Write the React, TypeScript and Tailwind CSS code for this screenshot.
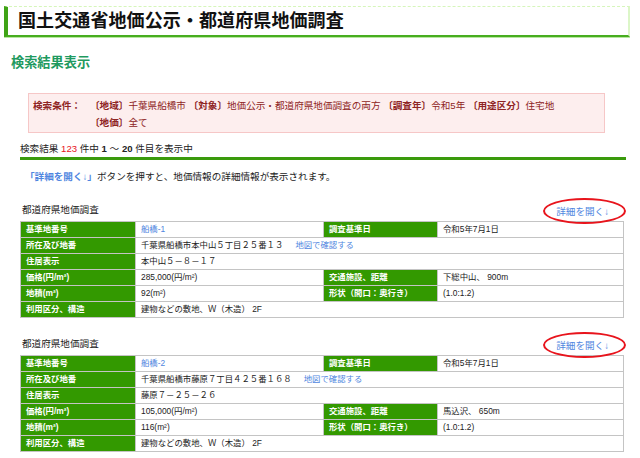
import React from 'react';

type Row =
  | { kind: 'pair'; l1: string; v1: React.ReactNode; l2: string; v2: React.ReactNode }
  | { kind: 'wide'; l1: string; v1: React.ReactNode };

interface Survey {
  no: string;
  date: string;
  address: string;
  residence: string;
  price: string;
  station: string;
  area: string;
  shape: string;
  use: string;
}

const surveys: Survey[] = [
  {
    no: '船橋-1',
    date: '令和5年7月1日',
    address: '千葉県船橋市本中山５丁目２５番１３',
    residence: '本中山５－８－１７',
    price: '285,000(円/m²)',
    station: '下総中山、 900m',
    area: '92(m²)',
    shape: '(1.0:1.2)',
    use: '建物などの敷地、Ｗ（木造） 2F',
  },
  {
    no: '船橋-2',
    date: '令和5年7月1日',
    address: '千葉県船橋市藤原７丁目４２５番１６８',
    residence: '藤原７－２５－２６',
    price: '105,000(円/m²)',
    station: '馬込沢、 650m',
    area: '116(m²)',
    shape: '(1.0:1.2)',
    use: '建物などの敷地、Ｗ（木造） 2F',
  },
];

const Label = ({ children }: { children: React.ReactNode }) => (
  <div className="bg-[#339900] text-white font-bold pl-[5px] flex items-center whitespace-nowrap">
    {children}
  </div>
);

const Value = ({ children, wide }: { children: React.ReactNode; wide?: boolean }) => (
  <div className={`bg-white text-[#222] pl-[5px] flex items-center whitespace-nowrap ${wide ? 'col-span-3' : ''}`}>
    {children}
  </div>
);

// 地価調査の1件分（見出し＋表）
function SurveyBlock({ s }: { s: Survey }) {
  const rows: Row[] = [
    { kind: 'pair', l1: '基準地番号', v1: <span className="text-[#4f86e0]">{s.no}</span>, l2: '調査基準日', v2: s.date },
    {
      kind: 'wide',
      l1: '所在及び地番',
      v1: (
        <>
          {s.address}
          <span className="ml-[12px] text-[#4f86e0]">地図で確認する</span>
        </>
      ),
    },
    { kind: 'wide', l1: '住居表示', v1: s.residence },
    { kind: 'pair', l1: '価格(円/m²)', v1: s.price, l2: '交通施設、距離', v2: s.station },
    { kind: 'pair', l1: '地積(m²)', v1: s.area, l2: '形状（間口：奥行き）', v2: s.shape },
    { kind: 'wide', l1: '利用区分、構造', v1: s.use },
  ];

  return (
    <div className="ml-[20px] w-[604px] mt-[19px]">
      <div className="flex justify-between h-[18px]">
        <div className="ml-[2px] text-[9.6px] leading-[14px] text-[#222]">都道府県地価調査</div>
        <div className="relative mr-[15px] mt-[2px] text-[9.6px] leading-[14px] text-[#4f86e0]">
          詳細を開く↓
          {/* 赤い丸囲み */}
          <span className="absolute left-[-13px] right-[-17px] top-[-7px] bottom-[-3px] rounded-[50%] border-[2.5px] border-[#e8141c] pointer-events-none" />
        </div>
      </div>
      <div className="grid grid-cols-[114px_187px_113px_185px] auto-rows-[15px] gap-px p-px bg-[#c4c4c4] text-[8.4px]">
        {rows.map((r, i) =>
          r.kind === 'pair' ? (
            <React.Fragment key={i}>
              <Label>{r.l1}</Label>
              <Value>{r.v1}</Value>
              <Label>{r.l2}</Label>
              <Value>{r.v2}</Value>
            </React.Fragment>
          ) : (
            <React.Fragment key={i}>
              <Label>{r.l1}</Label>
              <Value wide>{r.v1}</Value>
            </React.Fragment>
          )
        )}
      </div>
    </div>
  );
}

export default function App() {
  return (
    <div
      className="w-[640px] h-[458px] overflow-hidden bg-white flex flex-col"
      style={{ fontFamily: '"Liberation Sans", "Noto Sans CJK JP", sans-serif' }}
    >
      {/* タイトル */}
      <div className="mt-[6px] ml-[4px] w-[626px] h-[31px] border-solid [border-top-style:dashed] border-l-4 border-l-[#3fa316] border-t border-t-[#d6f6bb] border-r-2 border-r-[#dcf6c8] border-b-2 border-b-[#47ad1f] flex items-center shadow-[0_1px_0_#b8e6a0]">
        <h1 className="pl-[10px] text-[18px] font-bold text-[#111] tracking-[0.1px]">国土交通省地価公示・都道府県地価調査</h1>
      </div>

      <h2 className="mt-[18px] ml-[11px] text-[13.2px] leading-[16px] font-bold text-[#1f9a5f]">検索結果表示</h2>

      {/* 検索条件 */}
      <div className="mt-[22px] ml-[28px] w-[577px] h-[40px] bg-[#fdeeee] border border-[#f6c7c7] pt-[3px] flex text-[9.6px] leading-[17px] text-[#8e2424]">
        <div className="w-[61px] pl-[4px] font-bold shrink-0">検索条件：</div>
        <div>
          <div>
            <b>〔地域〕</b>千葉県船橋市 <b>〔対象〕</b>地価公示・都道府県地価調査の両方 <b>〔調査年〕</b>令和5年 <b>〔用途区分〕</b>住宅地
          </div>
          <div>
            <b>〔地価〕</b>全て
          </div>
        </div>
      </div>

      <div className="mt-[9px] ml-[20px] text-[9.6px] leading-[14px] text-[#222]">
        検索結果 <span className="text-[#e8141c]">123</span> 件中 <b>1</b> ～ <b>20</b> 件目を表示中
      </div>
      <div className="mt-[1px] ml-[20px] w-[606px] h-[3px] bg-[#3a9a0c]" />

      <div className="mt-[10px] ml-[25px] text-[9.6px] leading-[14px] text-[#222]">
        <span className="text-[#4f86e0] font-bold">「詳細を開く↓」</span>ボタンを押すと、地価情報の詳細情報が表示されます。
      </div>

      {surveys.map((s) => (
        <SurveyBlock key={s.no} s={s} />
      ))}
    </div>
  );
}
